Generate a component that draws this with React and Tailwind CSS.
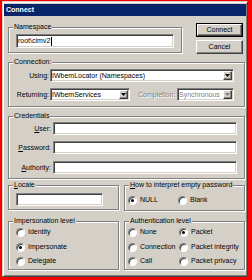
import React from "react";

const sunken =
  "bg-white border border-t-[#808080] border-l-[#808080] border-b-white border-r-white shadow-[inset_1px_1px_0_#404040,inset_-1px_-1px_0_#d4d0c8]";
const raised =
  "bg-[#d4d0c8] border border-t-white border-l-white border-b-[#404040] border-r-[#404040] shadow-[inset_-1px_-1px_0_#808080]";

function Group({ label, className, children }) {
  return (
    <div
      className={`border border-[#808080] shadow-[inset_1px_1px_0_#fff,1px_1px_0_#fff] ${className}`}
    >
      <div className="-mt-[5px] ml-[4px] w-fit bg-[#d4d0c8] px-[1px] leading-[8px]">
        {label}
      </div>
      {children}
    </div>
  );
}

function Arrow({ disabled }) {
  return (
    <svg width="5" height="3" viewBox="0 0 5 3">
      <path d="M0 0h5L2.5 3z" fill={disabled ? "#808080" : "#000"} />
    </svg>
  );
}

function Combo({ value, className, disabled }) {
  return (
    <div
      className={`${sunken} ${disabled ? "bg-[#d4d0c8]" : ""} flex h-[13px] items-center ${className}`}
    >
      <span
        className={`ml-[1px] flex-1 truncate leading-[9px] ${
          disabled ? "text-[#808080] [text-shadow:1px_1px_0_#fff]" : ""
        }`}
      >
        {value}
      </span>
      <span
        className={`${raised} mr-[1px] flex h-[9px] w-[9px] items-center justify-center`}
      >
        <Arrow disabled={disabled} />
      </span>
    </div>
  );
}

function Field({ label, accel, mt }) {
  return (
    <div className={`flex items-center ${mt}`}>
      <span className="w-[42px] text-right leading-[8px]">
        <span className="underline">{accel}</span>
        {label}
      </span>
      <div className={`${sunken} ml-[2px] h-[13px] w-[184px]`} />
    </div>
  );
}

function Radio({ checked, label, className = "" }) {
  return (
    <div className={`flex h-[10px] items-center ${className}`}>
      <span className="flex h-[9px] w-[9px] items-center justify-center rounded-full border border-t-[#808080] border-l-[#808080] border-b-white border-r-white bg-white shadow-[inset_1px_1px_0_#404040]">
        {checked && <span className="h-[3px] w-[3px] rounded-full bg-black" />}
      </span>
      <span className="ml-[3px] leading-[8px]">{label}</span>
    </div>
  );
}

function Button({ children, isDefault }) {
  return (
    <div className={isDefault ? "border border-black" : ""}>
      <div
        className={`${raised} flex items-center justify-center leading-[8px] ${
          isDefault ? "h-[12px]" : "h-[14px]"
        }`}
      >
        {children}
      </div>
    </div>
  );
}

export default function App() {
  return (
    <div className="h-[280px] w-[252px] bg-[#ff0000] pl-[2px] pt-[1px] font-['Liberation_Sans',Arial,sans-serif] text-[7px] text-black">
      <div className="h-[276px] w-[246px] border border-b-[#404040] border-l-[#d4d0c8] border-r-[#404040] border-t-[#d4d0c8] bg-[#d4d0c8] px-[1px] pt-[2px] shadow-[inset_1px_1px_0_#fff,inset_-1px_-1px_0_#808080]">
        <div className="flex h-[12px] items-center bg-[#0a246a] pl-[2px] font-bold text-white">
          Connect
        </div>

        <div className="flex h-[37px] items-start">
          <Group label="Namespace" className="ml-[4px] mt-[11px] h-[26px] w-[174px]">
            <div className={`${sunken} ml-[7px] mt-[3px] flex h-[14px] w-[158px] items-center pl-[1px]`}>
              <span className="leading-[8px]">root\cimv2</span>
              <span className="ml-[1px] h-[9px] w-px bg-black" />
            </div>
          </Group>
          <div className="ml-[14px] mt-[7px] flex w-[47px] flex-col gap-[3px]">
            <Button isDefault>Connect</Button>
            <Button>Cancel</Button>
          </div>
        </div>

        <Group label="Connection:" className="ml-[4px] mt-[9px] h-[45px] w-[237px]">
          <div className="mt-[3px] flex items-center">
            <span className="w-[40px] text-right leading-[8px]">Using:</span>
            <Combo value="IWbemLocator (Namespaces)" className="ml-[1px] w-[184px]" />
          </div>
          <div className="mt-[6px] flex items-center">
            <span className="w-[40px] text-right leading-[8px]">Returning:</span>
            <Combo value="IWbemServices" className="ml-[1px] w-[80px]" />
            <span className="ml-[8px] w-[39px] leading-[8px] text-[#808080] [text-shadow:1px_1px_0_#fff]">
              Completion:
            </span>
            <Combo value="Synchronous" className="w-[57px]" disabled />
          </div>
        </Group>

        <Group label="Credentials" className="ml-[4px] mt-[9px] h-[63px] w-[237px]">
          <Field accel="U" label="ser:" mt="mt-[2px]" />
          <Field accel="P" label="assword:" mt="mt-[6px]" />
          <Field accel="A" label="uthority:" mt="mt-[7px]" />
        </Group>

        <div className="mt-[6px] flex h-[26px] items-start">
          <Group
            label={
              <>
                <span className="underline">L</span>ocale
              </>
            }
            className="ml-[4px] h-[25px] w-[111px]"
          >
            <div className={`${sunken} ml-[7px] mt-[4px] h-[13px] w-[87px]`} />
          </Group>
          <Group
            label={
              <>
                <span className="underline">H</span>ow to interpret empty password
              </>
            }
            className="ml-[5px] h-[26px] w-[121px]"
          >
            <div className="ml-[3px] mt-[6px] flex">
              <Radio checked label="NULL" className="w-[50px]" />
              <Radio label="Blank" />
            </div>
          </Group>
        </div>

        <div className="mt-[10px] flex items-start">
          <Group label="Impersonation level" className="ml-[4px] h-[49px] w-[111px]">
            <div className="ml-[7px]">
              <Radio label="Identity" className="mt-[2px]" />
              <Radio checked label="Impersonate" className="mt-[5px]" />
              <Radio label="Delegate" className="mt-[4px]" />
            </div>
          </Group>
          <Group label="Authentication level" className="ml-[5px] h-[49px] w-[121px]">
            <div className="ml-[3px] grid grid-cols-[51px_1fr]">
              <Radio label="None" className="mt-[2px]" />
              <Radio checked label="Packet" className="mt-[2px]" />
              <Radio label="Connection" className="mt-[5px]" />
              <Radio label="Packet integrity" className="mt-[5px]" />
              <Radio label="Call" className="mt-[4px]" />
              <Radio label="Packet privacy" className="mt-[4px]" />
            </div>
          </Group>
        </div>
      </div>
    </div>
  );
}
